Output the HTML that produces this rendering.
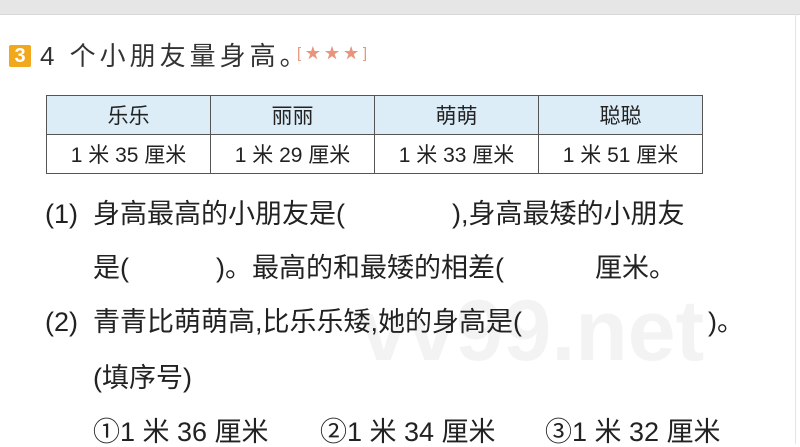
<!DOCTYPE html>
<html><head><meta charset="utf-8"><style>
body{margin:0;width:800px;height:444px;overflow:hidden;background:#fff;position:relative;font-family:"Liberation Sans","Noto Sans CJK SC",sans-serif;color:#222}
.a{position:absolute;white-space:pre;line-height:1}
.t{font-size:27px}
table{position:absolute;left:46px;top:95px;border-collapse:collapse;font-size:21px}
td{border:1.5px solid #555;width:163px;text-align:center;padding:0}
tr.h td{background:#dcedf8;height:38px}
tr.r td{height:38px}
</style></head><body>
<div style="position:absolute;left:0;top:0;width:800px;height:14px;background:#e6e6e6;border-bottom:1px solid #d8d8d8"></div>
<div style="position:absolute;left:795px;top:14px;width:1px;height:430px;background:#e4e4e4"></div>
<div class="a" style="left:360px;top:288px;font-size:86px;font-weight:bold;color:#f3f3f3;font-family:'Liberation Sans',sans-serif">vv99.net</div>
<div class="a" style="left:9px;top:45px;width:22px;height:22px;background:#f2a81d;color:#fff;font-size:20px;font-weight:bold;text-align:center;line-height:22px;border-radius:2px">3</div>
<div class="a" style="left:40px;top:43px;font-size:26px;letter-spacing:4px;color:#333">4 个小朋友量身高。</div>
<div class="a" style="left:297px;top:46px;font-size:15px;color:#e8957c">[ ★ ★ ★ ]</div>
<table>
<tr class="h"><td>乐乐</td><td>丽丽</td><td>萌萌</td><td>聪聪</td></tr>
<tr class="r"><td>1 米 35 厘米</td><td>1 米 29 厘米</td><td>1 米 33 厘米</td><td>1 米 51 厘米</td></tr>
</table>
<div class="a t" style="left:45px;top:201px">(1)</div>
<div class="a t" style="left:93px;top:201px">身高最高的小朋友是(</div>
<div class="a t" style="left:452px;top:201px">),身高最矮的小朋友</div>
<div class="a t" style="left:93px;top:255px">是(</div>
<div class="a t" style="left:216px;top:255px">)。最高的和最矮的相差(</div>
<div class="a t" style="left:595px;top:255px">厘米。</div>
<div class="a t" style="left:45px;top:309px">(2)</div>
<div class="a t" style="left:93px;top:309px">青青比萌萌高,比乐乐矮,她的身高是(</div>
<div class="a t" style="left:708px;top:309px">)。</div>
<div class="a t" style="left:93px;top:365px">(填序号)</div>
<div class="a t" style="left:93px;top:419px">①1 米 36 厘米</div>
<div class="a t" style="left:320px;top:419px">②1 米 34 厘米</div>
<div class="a t" style="left:545px;top:419px">③1 米 32 厘米</div>
</body></html>
